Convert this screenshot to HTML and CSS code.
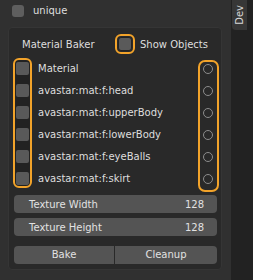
FILE: index.html
```html
<!DOCTYPE html>
<html>
<head>
<meta charset="utf-8">
<link rel="stylesheet" href="styles.css">
</head>
<body>
<div class="app">
  <div class="main">
    <div class="top-row">
      <span class="check"></span>
      <span class="label">unique</span>
    </div>
    <div class="panel">
      <div class="panel-head">
        <span class="title">Material Baker</span>
        <span class="show">
          <span class="hl-check"><span class="check inner"></span></span>
          <span class="label">Show Objects</span>
        </span>
      </div>
      <div class="list">
        <div class="col-left">
          <span class="box"></span><span class="box"></span><span class="box"></span>
          <span class="box"></span><span class="box"></span><span class="box"></span>
        </div>
        <div class="names">
          <div class="name">Material</div>
          <div class="name">avastar:mat:f:head</div>
          <div class="name">avastar:mat:f:upperBody</div>
          <div class="name">avastar:mat:f:lowerBody</div>
          <div class="name">avastar:mat:f:eyeBalls</div>
          <div class="name">avastar:mat:f:skirt</div>
        </div>
        <div class="col-right">
          <span class="radio"></span><span class="radio"></span><span class="radio"></span>
          <span class="radio"></span><span class="radio"></span><span class="radio"></span>
        </div>
      </div>
      <div class="field first"><span>Texture Width</span><span>128</span></div>
      <div class="field"><span>Texture Height</span><span>128</span></div>
      <div class="buttons">
        <div class="btn left">Bake</div>
        <div class="btn right">Cleanup</div>
      </div>
    </div>
  </div>
  <div class="sidebar">
    <div class="tab"><span class="tab-text">Dev</span></div>
  </div>
</div>
</body>
</html>
```
FILE: styles.css
```css
html, body {
  margin: 0;
  padding: 0;
}
body {
  background: #303030;
  font-family: "DejaVu Sans", sans-serif;
  font-size: 10px;
  color: #dedede;
  width: 253px;
  height: 280px;
  overflow: hidden;
}
.app {
  display: flex;
  width: 253px;
  height: 280px;
}
.main {
  width: 231px;
  flex: none;
}
.top-row {
  display: flex;
  align-items: center;
  height: 22px;
  padding-left: 12px;
  box-sizing: border-box;
}
.check {
  display: block;
  width: 12px;
  height: 12px;
  border-radius: 3px;
  background: #5e5e5e;
  flex: none;
}
.top-row .label {
  margin-left: 9px;
  line-height: 12px;
}
.panel {
  margin: 5px 0 0 8px;
  width: 214px;
  height: 243px;
  box-sizing: border-box;
  background: #292929;
  border: 1px solid #353535;
  border-radius: 4px;
  padding: 0 0 0 5px;
}
.panel-head {
  display: flex;
  align-items: center;
  height: 28px;
  margin-top: 2px;
}
.title {
  margin-left: 8px;
  width: 93px;
}
.show {
  display: flex;
  align-items: center;
}
.hl-check {
  display: flex;
  align-items: center;
  justify-content: center;
  width: 20px;
  height: 20px;
  box-sizing: border-box;
  border: 2px solid #f2a32a;
  border-radius: 6px;
}
.hl-check .inner {
  width: 14px;
  height: 14px;
  border-radius: 3px;
  background: #5a5a5a;
  box-sizing: border-box;
  border: 1px solid #232323;
}
.show .label {
  margin-left: 5px;
}
.list {
  display: flex;
  align-items: flex-start;
  height: 135px;
}
.col-left {
  display: flex;
  flex-direction: column;
  gap: 9px;
  width: 19px;
  box-sizing: border-box;
  border: 2px solid #f2a32a;
  border-radius: 6px;
  padding: 2px 1px 1px 1px;
  margin-left: -1px;
  background: #222222;
}
.box {
  display: block;
  width: 13px;
  height: 13px;
  border-radius: 2px;
  background: #595959;
}
.names {
  margin-left: 6px;
  width: 160px;
}
.name {
  height: 22px;
  line-height: 22px;
  white-space: nowrap;
}
.col-right {
  display: flex;
  flex-direction: column;
  gap: 12px;
  width: 21px;
  box-sizing: border-box;
  border: 2px solid #f2a32a;
  border-radius: 7px;
  padding: 2px 0 6px 3px;
  margin-top: 2px;
}
.radio {
  display: block;
  width: 10px;
  height: 10px;
  box-sizing: border-box;
  border: 1px solid #8c8c8c;
  border-radius: 50%;
}
.field {
  display: flex;
  justify-content: space-between;
  align-items: center;
  width: 203px;
  height: 18px;
  box-sizing: border-box;
  background: #545454;
  border-radius: 4px;
  padding: 0 13px 0 15px;
  color: #e2e2e2;
  margin-top: 5px;
}
.field.first {
  margin-top: 2px;
}
.buttons {
  display: flex;
  gap: 1px;
  width: 203px;
  margin-top: 10px;
}
.btn {
  height: 18px;
  line-height: 18px;
  background: #545454;
  color: #e2e2e2;
  text-align: center;
}
.btn.left {
  width: 100px;
  border-radius: 4px 0 0 4px;
}
.btn.right {
  flex: 1;
  border-radius: 0 4px 4px 0;
}
.sidebar {
  width: 22px;
  flex: none;
  background: #222222;
}
.tab {
  width: 15px;
  height: 30px;
  margin-left: 1px;
  background: #373737;
  border-radius: 0 0 0 4px;
  display: flex;
  align-items: center;
  justify-content: center;
}
.tab-text {
  writing-mode: vertical-rl;
  transform: rotate(180deg);
  font-size: 10px;
  color: #d8d8d8;
}
```
